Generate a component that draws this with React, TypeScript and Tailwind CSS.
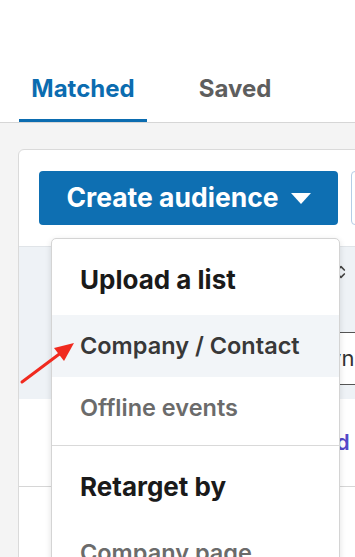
import { ChevronsUpDown } from 'lucide-react';

// ─── DROPDOWN MENU ─────────────────────────────────────────────
const MENU = [
  { heading: 'Upload a list', items: ['Company / Contact', 'Offline events'] },
  { heading: 'Retarget by', items: ['Company page', 'Website'] },
];

function AudienceMenu() {
  return (
    <div className="absolute left-[32px] top-[88px] w-[289px] rounded-t-[5px] border border-[#d4d4d4] bg-white shadow-[0_2px_6px_rgba(0,0,0,0.12)] z-10">
      {MENU.map((group, gi) => (
        <div key={group.heading} className={gi > 0 ? 'border-t border-[#d9d9d9]' : ''}>
          <div className="px-[28px] pt-[25px] pb-[20px] text-[26px] font-bold leading-[31px] text-[#1a1a1a] whitespace-nowrap">
            {group.heading}
          </div>
          <div className="pb-[6px]">
            {group.items.map((item, i) => (
              <div
                key={item}
                className={`h-[62px] flex items-center px-[28px] text-[23.5px] font-semibold whitespace-nowrap ${
                  gi === 0 && i === 0 ? 'bg-[#f2f5f8] text-[#383838]' : 'text-[#6b6b6b]'
                }`}
              >
                {item}
              </div>
            ))}
          </div>
        </div>
      ))}
    </div>
  );
}

export default function App() {
  return (
    <div className="relative w-[355px] h-[557px] overflow-hidden bg-[#f4f4f4]" style={{ fontFamily: 'Inter, "Liberation Sans", sans-serif' }}>
      {/* ── Tabs ── */}
      <div className="h-[123px] bg-white border-b border-[#d6d6d6] flex items-end pl-[19px]">
        <div className="w-[128px] h-[53px] flex items-start justify-center border-b-[3px] border-[#0b6cb0] text-[24px] font-bold text-[#0b6cb0] leading-[30px] pt-[5px]">
          Matched
        </div>
        <div className="ml-[40px] w-[96px] h-[53px] flex items-start justify-center text-[24px] font-bold text-[#5e5e5e] leading-[30px] pt-[5px]">
          Saved
        </div>
      </div>

      {/* ── Card ── */}
      <div className="pt-[26px] pl-[18px]">
        <div className="relative w-[420px] h-[500px] bg-white border border-[#dadada] rounded-[6px]">
          <div className="flex gap-[13px] pt-[21px] pl-[20px] pb-[21px]">
            <button className="w-[299px] h-[54px] rounded-[4px] bg-[#0e6fb2] text-white text-[26.5px] font-bold flex items-center justify-center gap-[12px]">
              Create audience
              <svg width="20" height="11" viewBox="0 0 20 11">
                <path d="M0 0h20L10 11z" fill="#fff" />
              </svg>
            </button>
            <div className="w-[80px] h-[54px] rounded-[4px] border border-[#b5cde6] bg-white" />
          </div>

          {/* list header row */}
          <div className="h-[153px] bg-[#eef2f6] border-t border-[#e0e4e8] flex flex-col">
            <div className="h-[50px] pl-[314px] flex items-center text-[#444]">
              <ChevronsUpDown className="w-[16px] h-[22px]" strokeWidth={2.5} />
            </div>
            <div className="ml-[286px] pl-[10px] mt-[35px] h-[53px] border-y border-[#555] bg-white flex items-center text-[22px] text-[#333] whitespace-nowrap">
              Syncing
            </div>
          </div>

          <div className="h-[88px] flex items-center pl-[255px] text-[22px] font-semibold text-[#5548c8] whitespace-nowrap border-b border-[#d6d6d6]">
            Upload
          </div>

          <AudienceMenu />
        </div>
      </div>

      {/* ── Annotation arrow ── */}
      <svg className="absolute left-0 top-0 pointer-events-none z-20" width="355" height="557">
        <line x1="22" y1="382" x2="62" y2="352" stroke="#f02a1f" strokeWidth="3" strokeLinecap="round" />
        <path d="M74 343 L54 348 L64 361 Z" fill="#f02a1f" />
      </svg>
    </div>
  );
}
